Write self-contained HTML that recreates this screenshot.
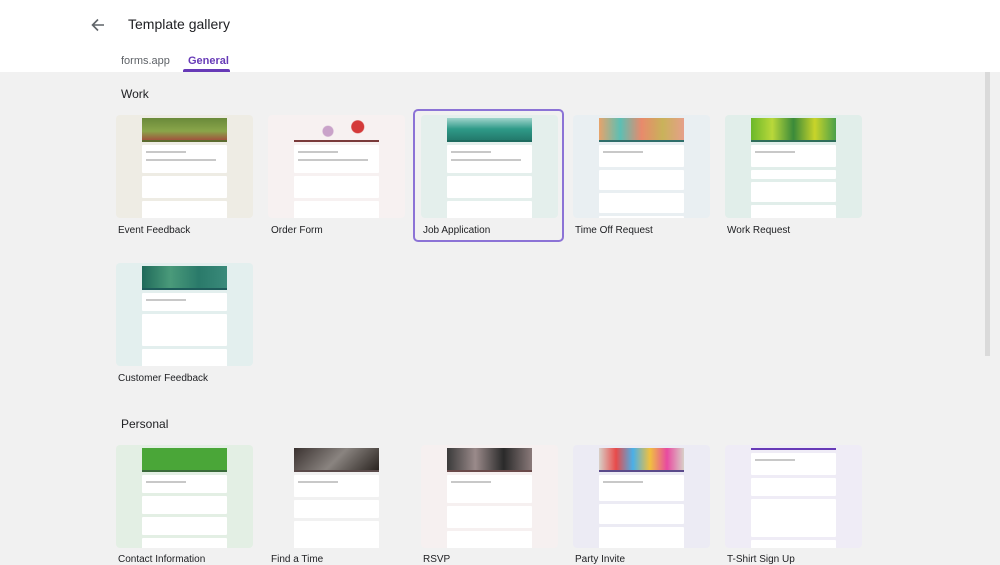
<!DOCTYPE html>
<html><head><meta charset="utf-8"><style>
*{margin:0;padding:0;box-sizing:border-box}
body{width:1000px;height:564px;overflow:hidden;background:#f1f1f1;font-family:"Liberation Sans",Arial,sans-serif;position:relative}
.top{position:absolute;left:0;top:0;width:1000px;height:72px;background:#fff}
.t{position:absolute;color:#202124}
.card{position:absolute;width:137px;height:103px;border-radius:4px;overflow:hidden}
.form{position:absolute;left:26px;top:3px;width:85px;height:100px}
.hdr{height:22px}
.ln{height:2px}
.blk{background:#fff;margin-top:3px;border-radius:1px;position:relative}
.blk i{position:absolute;left:4px;height:1.5px;background:#c8c8c8;display:block}
.lab{position:absolute;font-size:10px;color:#202124}
</style></head><body>
<div class="top"></div>
<svg style="position:absolute;left:90px;top:17px" width="16" height="16" viewBox="0 0 16 16"><path d="M14 8H3M8 2.5L2.5 8 8 13.5" stroke="#5f6368" stroke-width="1.6" fill="none"/></svg>
<div class="t" style="left:128px;top:16px;font-size:14px">Template gallery</div>
<div class="t" style="left:121px;top:55px;font-size:11px;color:#5f6368">forms.app</div>
<div class="t" style="left:188px;top:55px;font-size:11px;color:#673ab7;font-weight:bold">General</div>
<div style="position:absolute;left:183px;top:69px;width:47px;height:3px;background:#673ab7;border-radius:2px 2px 0 0"></div>
<div style="position:absolute;left:985px;top:72px;width:5px;height:284px;background:#dadada"></div>
<div class="t" style="left:121px;top:87px;font-size:12px">Work</div>
<div class="t" style="left:121px;top:417px;font-size:12px">Personal</div>
<div style="position:absolute;left:413px;top:109px;width:151px;height:133px;border:2px solid #8c73d6;border-radius:5px"></div>

<div class="card" style="left:116px;top:115px;background:#eeece4"><div class="form"><div class="hdr" style="background:linear-gradient(180deg,#6a8a3a,#8aa54a 60%,#a0553d)"></div><div class="ln" style="background:#5c6b2f"></div><div class="blk" style="height:28px"><i style="top:6px;width:40px"></i><i style="top:14px;width:70px"></i></div><div class="blk" style="height:22px"></div><div class="blk" style="height:25px"></div></div></div>
<div class="lab" style="left:118px;top:225px">Event Feedback</div>

<div class="card" style="left:268px;top:115px;background:#f7f1f1"><div class="form"><div class="hdr" style="background:radial-gradient(circle at 75% 40%,#d43a3a 6px,transparent 7px),radial-gradient(circle at 40% 60%,#c9a2c9 5px,transparent 6px),#f7f1f1"></div><div class="ln" style="background:#7a3a3a"></div><div class="blk" style="height:28px"><i style="top:6px;width:40px"></i><i style="top:14px;width:70px"></i></div><div class="blk" style="height:22px"></div><div class="blk" style="height:25px"></div></div></div>
<div class="lab" style="left:271px;top:225px">Order Form</div>

<div class="card" style="left:421px;top:115px;background:#e4efec"><div class="form"><div class="hdr" style="background:linear-gradient(180deg,#9fd4cc,#2f9a88 50%,#237a6c)"></div><div class="ln" style="background:#1e6b5f"></div><div class="blk" style="height:28px"><i style="top:6px;width:40px"></i><i style="top:14px;width:70px"></i></div><div class="blk" style="height:22px"></div><div class="blk" style="height:25px"></div></div></div>
<div class="lab" style="left:423px;top:225px">Job Application</div>

<div class="card" style="left:573px;top:115px;background:#e9eff2"><div class="form"><div class="hdr" style="background:linear-gradient(90deg,#e7a36b,#5cbfb4,#e88a6c,#c9b25a,#e6a08a)"></div><div class="ln" style="background:#2f6e6a"></div><div class="blk" style="height:22px"><i style="top:6px;width:40px"></i></div><div class="blk" style="height:20px"></div><div class="blk" style="height:20px"></div><div class="blk" style="height:20px"></div></div></div>
<div class="lab" style="left:575px;top:225px">Time Off Request</div>

<div class="card" style="left:725px;top:115px;background:#e1eeea"><div class="form"><div class="hdr" style="background:linear-gradient(90deg,#6bb82a,#b9d83a,#3a8a3a,#c8d42a,#4aa04a)"></div><div class="ln" style="background:#2f6e5a"></div><div class="blk" style="height:22px"><i style="top:6px;width:40px"></i></div><div class="blk" style="height:9px"></div><div class="blk" style="height:20px"></div><div class="blk" style="height:20px"></div></div></div>
<div class="lab" style="left:727px;top:225px">Work Request</div>

<div class="card" style="left:116px;top:263px;background:#e3efee"><div class="form"><div class="hdr" style="background:linear-gradient(90deg,#1f6a5a,#4a9a7a,#2a7a6a,#3a8a7a)"></div><div class="ln" style="background:#1e5b5a"></div><div class="blk" style="height:18px"><i style="top:6px;width:40px"></i></div><div class="blk" style="height:32px"></div><div class="blk" style="height:22px"></div></div></div>
<div class="lab" style="left:118px;top:373px">Customer Feedback</div>

<div class="card" style="left:116px;top:445px;background:#e3efe4"><div class="form"><div class="hdr" style="background:#4aa638"></div><div class="ln" style="background:#3a6b3a"></div><div class="blk" style="height:18px"><i style="top:6px;width:40px"></i></div><div class="blk" style="height:18px"></div><div class="blk" style="height:18px"></div><div class="blk" style="height:18px"></div></div></div>
<div class="lab" style="left:118px;top:554px">Contact Information</div>

<div class="card" style="left:268px;top:445px;background:#f1f1f1"><div class="form"><div class="hdr" style="background:linear-gradient(135deg,#3a3230,#8a8480 50%,#2a2420)"></div><div class="ln" style="background:#5a4a4a"></div><div class="blk" style="height:22px"><i style="top:6px;width:40px"></i></div><div class="blk" style="height:18px"></div><div class="blk" style="height:35px"></div></div></div>
<div class="lab" style="left:271px;top:554px">Find a Time</div>

<div class="card" style="left:421px;top:445px;background:#f6f0f0"><div class="form"><div class="hdr" style="background:linear-gradient(90deg,#3a3a3a,#9a8a8a,#2a2a2a,#8a7a7a)"></div><div class="ln" style="background:#6a4a4a"></div><div class="blk" style="height:28px"><i style="top:6px;width:40px"></i></div><div class="blk" style="height:22px"></div><div class="blk" style="height:20px"></div></div></div>
<div class="lab" style="left:423px;top:554px">RSVP</div>

<div class="card" style="left:573px;top:445px;background:#ecebf4"><div class="form"><div class="hdr" style="background:linear-gradient(90deg,#d8d0c8,#e84a4a,#4ab0e8,#f0c040,#e84aa0,#d8d0c8)"></div><div class="ln" style="background:#5a4a8a"></div><div class="blk" style="height:26px"><i style="top:6px;width:40px"></i></div><div class="blk" style="height:20px"></div><div class="blk" style="height:24px"></div></div></div>
<div class="lab" style="left:575px;top:554px">Party Invite</div>

<div class="card" style="left:725px;top:445px;background:#efecf6"><div class="form"><div class="ln" style="background:#673ab7"></div><div class="blk" style="height:22px"><i style="top:6px;width:40px"></i></div><div class="blk" style="height:18px"></div><div class="blk" style="height:38px"></div><div class="blk" style="height:18px"></div></div></div>
<div class="lab" style="left:727px;top:554px">T-Shirt Sign Up</div>
</body></html>
